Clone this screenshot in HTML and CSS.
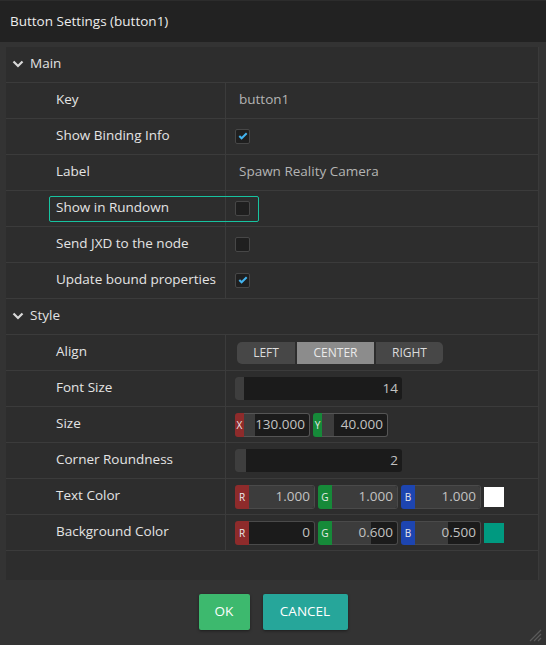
FILE: index.html
```html
<!DOCTYPE html>
<html>
<head>
<meta charset="utf-8">
<link rel="stylesheet" href="styles.css">
</head>
<body>
<div class="titlebar">Button Settings (button1)</div>
<div class="panel">
  <div class="section">
    <svg class="chev" width="12" height="8" viewBox="0 0 12 8"><polyline points="1.5,1.5 6,6 10.5,1.5" fill="none" stroke="#d8d8d8" stroke-width="2.2"/></svg>
    <span>Main</span>
  </div>
  <div class="row"><div class="lab">Key</div><div class="val"><span class="txt">button1</span></div></div>
  <div class="row"><div class="lab">Show Binding Info</div><div class="val"><span class="cb"><svg width="10" height="8" viewBox="0 0 10 8"><polyline points="1.3,4 3.6,6.3 8.7,1.3" fill="none" stroke="#43b4f0" stroke-width="2"/></svg></span></div></div>
  <div class="row"><div class="lab">Label</div><div class="val"><span class="txt">Spawn Reality Camera</span></div></div>
  <div class="row"><div class="lab">Show in Rundown</div><div class="val"><span class="cb"></span></div><div class="focus"></div></div>
  <div class="row"><div class="lab">Send JXD to the node</div><div class="val"><span class="cb"></span></div></div>
  <div class="row"><div class="lab">Update bound properties</div><div class="val"><span class="cb"><svg width="10" height="8" viewBox="0 0 10 8"><polyline points="1.3,4 3.6,6.3 8.7,1.3" fill="none" stroke="#43b4f0" stroke-width="2"/></svg></span></div></div>
  <div class="section">
    <svg class="chev" width="12" height="8" viewBox="0 0 12 8"><polyline points="1.5,1.5 6,6 10.5,1.5" fill="none" stroke="#d8d8d8" stroke-width="2.2"/></svg>
    <span>Style</span>
  </div>
  <div class="row"><div class="lab">Align</div><div class="val">
    <div class="seg">
      <span class="seg-item seg-left">LEFT</span>
      <span class="seg-item seg-center active">CENTER</span>
      <span class="seg-item seg-right">RIGHT</span>
    </div>
  </div></div>
  <div class="row"><div class="lab">Font Size</div><div class="val">
    <div class="slider"><span class="handle"></span><span class="num">14</span></div>
  </div></div>
  <div class="row"><div class="lab">Size</div><div class="val">
    <span class="tag tag-r tag-narrow">X</span><div class="field field-size"><span class="fhandle"></span><span class="num">130.000</span></div>
    <span class="tag tag-g tag-narrow">Y</span><div class="field field-size"><span class="fhandle"></span><span class="num">40.000</span></div>
  </div></div>
  <div class="row"><div class="lab">Corner Roundness</div><div class="val">
    <div class="slider"><span class="handle wide"></span><span class="num">2</span></div>
  </div></div>
  <div class="row"><div class="lab">Text Color</div><div class="val">
    <span class="tag tag-r">R</span><div class="field field-col"><span class="fill" style="width:100%"></span><span class="num">1.000</span></div>
    <span class="tag tag-g">G</span><div class="field field-col"><span class="fill" style="width:100%"></span><span class="num">1.000</span></div>
    <span class="tag tag-b">B</span><div class="field field-col"><span class="fill" style="width:100%"></span><span class="num">1.000</span></div>
    <span class="swatch swatch-white"></span>
  </div></div>
  <div class="row"><div class="lab">Background Color</div><div class="val">
    <span class="tag tag-r">R</span><div class="field field-col"><span class="fill" style="width:0%"></span><span class="num">0</span></div>
    <span class="tag tag-g">G</span><div class="field field-col"><span class="fill" style="width:60%"></span><span class="num">0.600</span></div>
    <span class="tag tag-b">B</span><div class="field field-col"><span class="fill" style="width:50%"></span><span class="num">0.500</span></div>
    <span class="swatch swatch-teal"></span>
  </div></div>
</div>
<div class="actions">
  <button class="btn btn-ok">OK</button>
  <button class="btn btn-cancel">CANCEL</button>
</div>
<svg class="grip" width="14" height="14" viewBox="0 0 14 14"><line x1="13" y1="2" x2="2" y2="13" stroke="#5a5a5a" stroke-width="1.3"/><line x1="13" y1="6" x2="6" y2="13" stroke="#5a5a5a" stroke-width="1.3"/><line x1="13" y1="10" x2="10" y2="13" stroke="#5a5a5a" stroke-width="1.3"/></svg>
</body>
</html>
```
FILE: styles.css
```css
* { box-sizing: border-box; }
html, body { margin: 0; padding: 0; }
body {
  background: #333333;
  font-family: "Open Sans", "Noto Sans", sans-serif;
  font-size: 13.5px;
  color: #e2e2e2;
  width: 546px;
  height: 645px;
  position: relative;
  overflow: hidden;
}
.titlebar {
  height: 42px;
  line-height: 40px;
  padding-left: 10px;
  background: #222222;
  border-top: 1px solid #2c2c2c;
  color: #ececec;
}
.panel {
  margin: 5px 7px 0 6px;
  width: 533px;
  height: 533px;
  background: #2d2d2d;
  border-right: 1px solid #3a3a3a;
}
.section {
  height: 36px;
  border-bottom: 1px solid #3b3b3b;
  display: flex;
  align-items: center;
  padding-left: 6px;
  padding-bottom: 3px;
  color: #e2e2e2;
}
.chev { margin-right: 6px; margin-top: 2px; }
.row {
  height: 36px;
  border-bottom: 1px solid #3b3b3b;
  display: grid;
  grid-template-columns: 220px 1fr;
  position: relative;
}
.lab {
  border-right: 1px solid #3b3b3b;
  padding-left: 50px;
  display: flex;
  align-items: center;
  padding-bottom: 4px;
  color: #e4e4e4;
}
.val {
  display: flex;
  align-items: center;
  padding-left: 9px;
}
.txt { color: #b4b4b4; padding-left: 4px; padding-bottom: 4px; }
.cb {
  width: 15px;
  height: 15px;
  background: #1f1f1f;
  border: 1px solid #474747;
  border-radius: 2px;
  display: flex;
  align-items: center;
  justify-content: center;
  margin-bottom: 1px;
}
.focus {
  position: absolute;
  left: 43px;
  top: 5px;
  width: 210px;
  height: 26px;
  border: 1px solid #17c3a0;
  border-radius: 2px;
}
.seg { display: flex; gap: 2px; margin-left: 2px; }
.seg-item {
  height: 22px;
  line-height: 21px;
  background: #474747;
  color: #dcdcdc;
  font-size: 12px;
  text-align: center;
}
.seg-left { width: 58px; border-radius: 5px 0 0 5px; }
.seg-center { width: 77px; }
.seg-right { width: 67px; border-radius: 0 5px 5px 0; }
.seg-item.active { background: #8c8c8c; color: #eaeaea; }
.slider {
  width: 167px;
  height: 23px;
  background: #1b1b1b;
  border-radius: 3px;
  display: flex;
  align-items: center;
  overflow: hidden;
  position: relative;
}
.handle { width: 9px; height: 100%; background: #3e3e3e; }
.handle.wide { width: 11px; }
.num {
  margin-left: auto;
  padding-right: 4px;
  color: #c2c2c2;
  position: relative;
  padding-bottom: 2px;
}
.tag {
  width: 14px;
  height: 24px;
  display: flex;
  align-items: center;
  justify-content: center;
  font-size: 10px;
  color: #eaeaea;
  border-radius: 3px 0 0 3px;
}
.tag-narrow { width: 9px; }
.tag-r { background: #8e2b2b; }
.tag-g { background: #168a39; margin-left: 3px; }
.tag-b { background: #1d45b0; margin-left: 3px; }
.field {
  height: 24px;
  border: 1px solid #4a4a4a;
  border-left: none;
  border-radius: 0 3px 3px 0;
  background: #1b1b1b;
  display: flex;
  align-items: center;
  position: relative;
  overflow: hidden;
}
.field-size { width: 66px; border-color: #555; }
.fhandle { width: 12px; height: 100%; background: #3d3d3d; }
.field-col { width: 66px; }
.fill { position: absolute; left: 0; top: 0; bottom: 0; background: #3c3c3c; }
.swatch { width: 20px; height: 20px; margin-left: 3px; }
.swatch-white { background: #ffffff; }
.swatch-teal { background: #009980; }
.actions {
  display: flex;
  justify-content: center;
  gap: 13px;
  margin-top: 14px;
}
.btn {
  height: 36px;
  border: none;
  border-radius: 2px;
  color: #ffffff;
  font-family: "Open Sans", "Noto Sans", sans-serif;
  font-size: 13.5px;
  box-shadow: 0 1px 3px rgba(0,0,0,0.45);
  padding: 0 0 2px 0;
}
.btn-ok { width: 51px; background: #3db96e; }
.btn-cancel { width: 85px; background: #26a69a; }
.grip { position: absolute; right: 4px; bottom: 3px; }
```
